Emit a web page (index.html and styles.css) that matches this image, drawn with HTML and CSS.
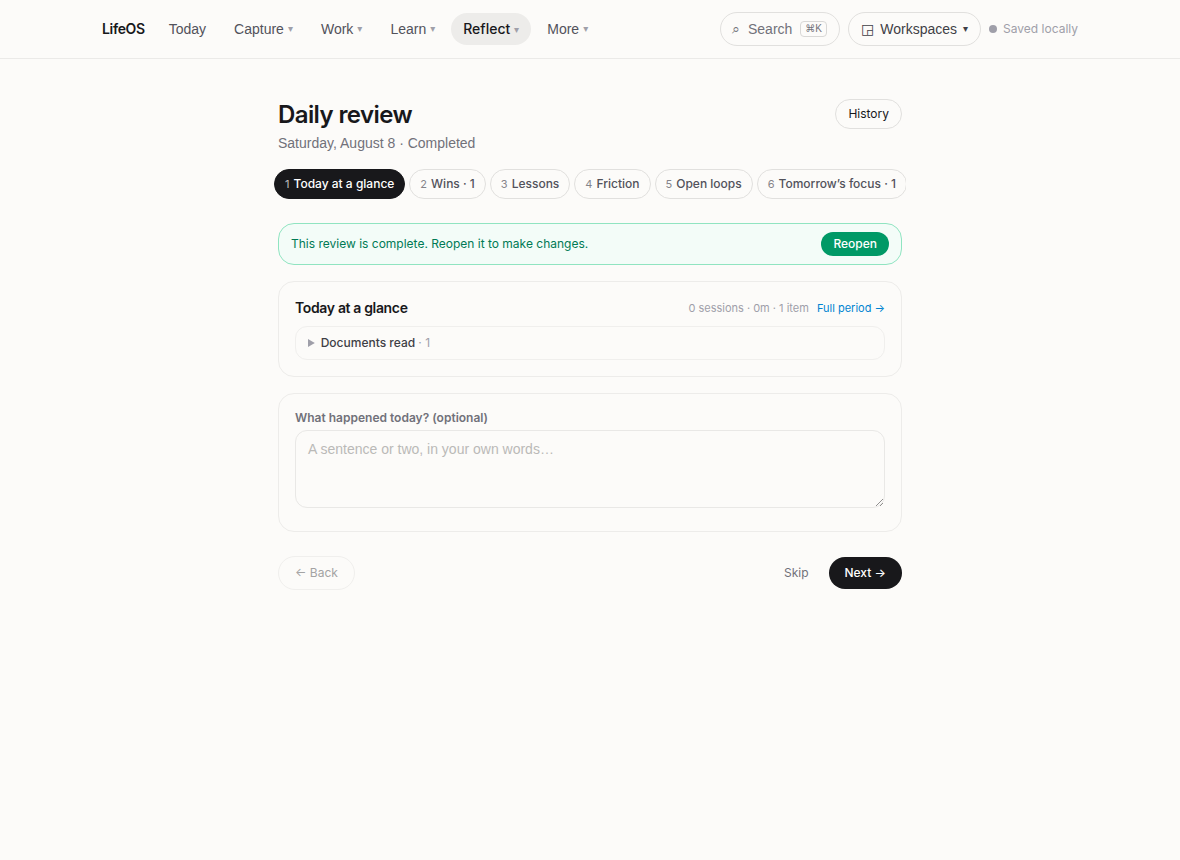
FILE: index.html
```html
<!DOCTYPE html>
<html lang="en">
<head>
    <meta charset="UTF-8">
    <meta name="viewport" content="width=device-width, initial-scale=1.0">
    <title>Daily review - LifeOS</title>
    <link rel="stylesheet" href="styles.css">
</head>
<body>
    <header class="topbar">
        <div class="topbar-inner">
            <a class="brand" href="#">LifeOS</a>
            <nav class="nav">
                <a class="nav-item" href="#">Today</a>
                <button class="nav-item" type="button">Capture<span class="caret">▾</span></button>
                <button class="nav-item" type="button">Work<span class="caret">▾</span></button>
                <button class="nav-item" type="button">Learn<span class="caret">▾</span></button>
                <button class="nav-item active" type="button">Reflect<span class="caret">▾</span></button>
                <button class="nav-item" type="button">More<span class="caret">▾</span></button>
            </nav>
            <div class="tools">
                <button class="tool search" type="button"><span class="glyph">⌕</span><span>Search</span><kbd>⌘K</kbd></button>
                <button class="tool" type="button"><span class="glyph">◲</span><span>Workspaces</span><span class="caret dark">▾</span></button>
                <span class="saved"><span class="dot"></span>Saved locally</span>
            </div>
        </div>
    </header>

    <main class="page">
        <div class="page-head">
            <div>
                <h1>Daily review</h1>
                <p class="subtitle">Saturday, August 8 · Completed</p>
            </div>
            <a class="history" href="#">History</a>
        </div>

        <nav class="steps">
            <button class="step current" type="button"><span class="num">1</span>Today at a glance</button>
            <button class="step" type="button"><span class="num">2</span>Wins · 1</button>
            <button class="step" type="button"><span class="num">3</span>Lessons</button>
            <button class="step" type="button"><span class="num">4</span>Friction</button>
            <button class="step" type="button"><span class="num">5</span>Open loops</button>
            <button class="step" type="button"><span class="num">6</span>Tomorrow’s focus · 1</button>
        </nav>

        <div class="banner">
            <span>This review is complete. Reopen it to make changes.</span>
            <button class="reopen" type="button">Reopen</button>
        </div>

        <section class="card">
            <div class="card-head">
                <h2>Today at a glance</h2>
                <div class="stats">
                    <span>0 sessions · 0m · 1 item</span>
                    <a href="#">Full period →</a>
                </div>
            </div>
            <details class="docs">
                <summary>Documents read <span class="count">· 1</span></summary>
            </details>
        </section>

        <section class="card">
            <label class="field-label" for="happened">What happened today? (optional)</label>
            <textarea class="field" id="happened" placeholder="A sentence or two, in your own words…" disabled></textarea>
        </section>

        <div class="actions">
            <button class="back" type="button" disabled>← Back</button>
            <div class="actions-right">
                <button class="skip" type="button">Skip</button>
                <button class="next" type="button">Next →</button>
            </div>
        </div>
    </main>
</body>
</html>
```

FILE: styles.css
```css
* {
    box-sizing: border-box;
}
body {
    margin: 0;
    min-height: 100vh;
    background: #fcfbf9;
    color: #18181b;
    font-family: Inter, "Liberation Sans", "DejaVu Sans", sans-serif;
    font-size: 14px;
    line-height: 20px;
}
a {
    color: inherit;
    text-decoration: none;
}
button,
textarea,
kbd {
    font: inherit;
    color: inherit;
}
button {
    margin: 0;
    border: 0;
    background: none;
    white-space: nowrap;
    cursor: pointer;
}
h1,
h2,
p {
    margin: 0;
}

/* top bar */
.topbar {
    border-bottom: 1px solid #ebeae8;
}
.topbar-inner {
    display: flex;
    align-items: center;
    gap: 12px;
    max-width: 1024px;
    margin: 0 auto;
    padding: 12px 24px;
}
.brand {
    font-weight: 600;
    letter-spacing: -0.025em;
}
.nav {
    display: flex;
    gap: 4px;
}
.nav-item,
.tool,
.subtitle,
.field {
    font-family: "Liberation Sans", "DejaVu Sans", sans-serif;
}
.nav-item {
    display: flex;
    align-items: center;
    gap: 4px;
    padding: 6px 12px;
    border-radius: 16px;
    color: #52525b;
}
.nav-item.active {
    background: #edecea;
    color: #18181b;
    font-family: Inter, "Liberation Sans", sans-serif;
    font-weight: 500;
}
.caret {
    font-size: 10px;
    color: #9f9fa9;
}
.caret.dark {
    color: #3f3f46;
}
.tools {
    display: flex;
    align-items: center;
    gap: 8px;
    margin-left: auto;
}
.tool {
    display: flex;
    align-items: center;
    gap: 6px;
    padding: 6px 12px;
    border: 1px solid #e1e0de;
    border-radius: 17px;
    color: #3f3f46;
}
.search {
    gap: 8px;
    padding: 6px 12px 6px 11px;
    color: #71717a;
}
kbd {
    padding: 0 4px;
    border: 1px solid #d9d8d6;
    border-radius: 4px;
    font-size: 10px;
    line-height: 14px;
}
.saved {
    display: flex;
    align-items: center;
    gap: 6px;
    font-size: 12px;
    color: #9f9fa9;
    white-space: nowrap;
}
.dot {
    width: 8px;
    height: 8px;
    border-radius: 50%;
    background: #9f9fa9;
}

/* page */
.page {
    max-width: 672px;
    margin: 0 auto;
    padding: 40px 24px;
}
.page-head {
    display: flex;
    justify-content: space-between;
    align-items: flex-start;
}
h1 {
    font-size: 24px;
    line-height: 32px;
    font-weight: 600;
    letter-spacing: -0.025em;
}
.subtitle {
    margin-top: 2px;
    color: #71717a;
}
.history {
    padding: 6px 12px;
    border: 1px solid #e1e0de;
    border-radius: 15px;
    font-size: 12px;
    line-height: 16px;
}
.steps {
    display: flex;
    gap: 4px;
    margin: 16px -4px 0;
    overflow: hidden;
}
.step {
    flex: none;
    padding: 6px 10px;
    border: 1px solid #e1e0de;
    border-radius: 15px;
    font-size: 12px;
    line-height: 16px;
    font-weight: 500;
    color: #52525b;
}
.step.current {
    border-color: #18181b;
    background: #18181b;
    color: #fff;
}
.num {
    margin-right: 4px;
    font-size: 11px;
    font-weight: 400;
    opacity: 0.7;
}
.banner {
    display: flex;
    justify-content: space-between;
    align-items: center;
    margin-top: 24px;
    padding: 8px 12px;
    border: 1px solid #90e4c1;
    border-radius: 16px;
    background: #f3fcf8;
    font-size: 12px;
    color: #007a55;
}
.reopen {
    padding: 4px 12px;
    border-radius: 12px;
    background: #009966;
    color: #fff;
    line-height: 16px;
    font-weight: 500;
}
.card {
    margin-top: 16px;
    padding: 16px;
    border: 1px solid #edecea;
    border-radius: 16px;
}
.card-head {
    display: flex;
    justify-content: space-between;
    align-items: center;
    margin-bottom: 8px;
}
h2 {
    font-size: 14px;
    line-height: 20px;
    font-weight: 600;
    letter-spacing: -0.025em;
}
.stats {
    display: flex;
    gap: 8px;
    font-size: 11px;
    color: #9f9fa9;
}
.stats a {
    color: #0084d1;
}
.docs {
    padding: 8px 12px;
    border: 1px solid #f0efed;
    border-radius: 12px;
    font-size: 12px;
    line-height: 16px;
}
.docs summary {
    font-weight: 500;
    color: #3f3f46;
    cursor: pointer;
}
.docs summary::marker {
    color: #9f9fa9;
}
.count {
    font-weight: 400;
    color: #9f9fa9;
}
.field-label {
    display: block;
    margin-bottom: 4px;
    font-size: 12px;
    line-height: 16px;
    font-weight: 600;
    color: #71717a;
}
.field {
    display: block;
    width: 100%;
    height: 78px;
    margin-bottom: 7px;
    padding: 8px 12px;
    border: 1px solid #e1e0de;
    border-radius: 12px;
    background: transparent;
    resize: vertical;
}
.field:disabled {
    opacity: 0.7;
}
.field::placeholder {
    color: #9f9e9c;
}
.actions {
    display: flex;
    justify-content: space-between;
    align-items: center;
    margin-top: 24px;
    font-size: 12px;
    line-height: 16px;
}
.actions-right {
    display: flex;
    align-items: center;
    gap: 8px;
}
.back {
    padding: 8px 16px;
    border: 1px solid #f0efed;
    border-radius: 17px;
    color: #a3a3a3;
}
.skip {
    padding: 8px 12px;
    color: #71717a;
}
.next {
    padding: 8px 16px;
    border-radius: 16px;
    background: #18181b;
    color: #fff;
    font-weight: 500;
}
```
